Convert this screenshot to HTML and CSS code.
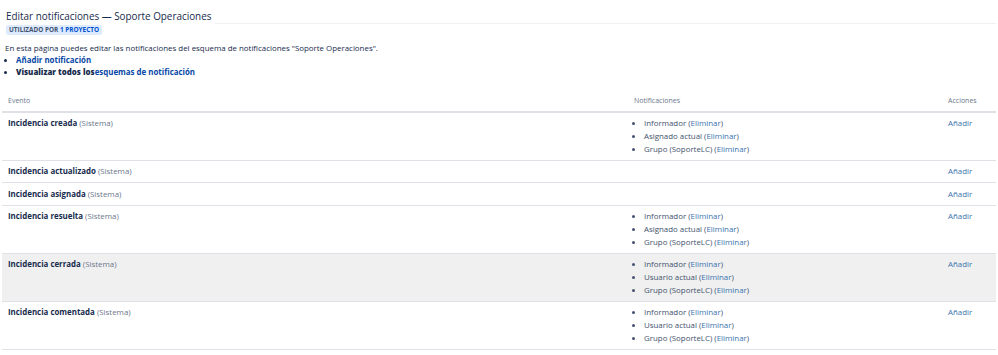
FILE: index.html
```html
<!DOCTYPE html>
<html lang="es">
<head>
<meta charset="utf-8">
<title>Editar notificaciones</title>
<link rel="stylesheet" href="styles.css">
</head>
<body>
<div class="page">
  <header class="page-header">
    <div class="title-row">
      <h1 class="title">Editar notificaciones — Soporte Operaciones</h1>
      <span class="title-rule"></span>
    </div>
    <span class="badge">Utilizado por <span class="badge-num">1 proyecto</span></span>
  </header>
  <p class="intro">En esta página puedes editar las notificaciones del esquema de notificaciones "Soporte Operaciones".</p>
  <ul class="ops">
    <li><a class="strong-link" href="#">Añadir notificación</a></li>
    <li><b>Visualizar todos los</b><a class="strong-link" href="#">esquemas de notificación</a></li>
  </ul>
  <table class="events">
    <thead>
      <tr><th class="c-ev">Evento</th><th class="c-no">Notificaciones</th><th class="c-ac">Acciones</th></tr>
    </thead>
    <tbody>
      <tr>
        <td class="c-ev"><b>Incidencia creada</b> <span class="sys">(Sistema)</span></td>
        <td class="c-no"><ul class="notifs">
          <li>Informador (<a href="#">Eliminar</a>)</li>
          <li>Asignado actual (<a href="#">Eliminar</a>)</li>
          <li>Grupo (SoporteLC) (<a href="#">Eliminar</a>)</li>
        </ul></td>
        <td class="c-ac"><a href="#">Añadir</a></td>
      </tr>
      <tr>
        <td class="c-ev"><b>Incidencia actualizado</b> <span class="sys">(Sistema)</span></td>
        <td class="c-no"></td>
        <td class="c-ac"><a href="#">Añadir</a></td>
      </tr>
      <tr>
        <td class="c-ev"><b>Incidencia asignada</b> <span class="sys">(Sistema)</span></td>
        <td class="c-no"></td>
        <td class="c-ac"><a href="#">Añadir</a></td>
      </tr>
      <tr>
        <td class="c-ev"><b>Incidencia resuelta</b> <span class="sys">(Sistema)</span></td>
        <td class="c-no"><ul class="notifs">
          <li>Informador (<a href="#">Eliminar</a>)</li>
          <li>Asignado actual (<a href="#">Eliminar</a>)</li>
          <li>Grupo (SoporteLC) (<a href="#">Eliminar</a>)</li>
        </ul></td>
        <td class="c-ac"><a href="#">Añadir</a></td>
      </tr>
      <tr class="hover">
        <td class="c-ev"><b>Incidencia cerrada</b> <span class="sys">(Sistema)</span></td>
        <td class="c-no"><ul class="notifs">
          <li>Informador (<a href="#">Eliminar</a>)</li>
          <li>Usuario actual (<a href="#">Eliminar</a>)</li>
          <li>Grupo (SoporteLC) (<a href="#">Eliminar</a>)</li>
        </ul></td>
        <td class="c-ac"><a href="#">Añadir</a></td>
      </tr>
      <tr>
        <td class="c-ev"><b>Incidencia comentada</b> <span class="sys">(Sistema)</span></td>
        <td class="c-no"><ul class="notifs">
          <li>Informador (<a href="#">Eliminar</a>)</li>
          <li>Usuario actual (<a href="#">Eliminar</a>)</li>
          <li>Grupo (SoporteLC) (<a href="#">Eliminar</a>)</li>
        </ul></td>
        <td class="c-ac"><a href="#">Añadir</a></td>
      </tr>
    </tbody>
  </table>
</div>
</body>
</html>
```
FILE: styles.css
```css
* { box-sizing: border-box; }
html, body { margin: 0; padding: 0; background: #fff; }
body {
  font-family: "Open Sans", "Noto Sans", sans-serif;
  font-size: 7.9px;
  line-height: 12.75px;
  color: #172b4d;
}
.page { padding: 10px 2px 0 2px; }
a { color: #3b73af; text-decoration: none; }
.page-header { padding-left: 4px; }
.title-row { display: flex; align-items: flex-end; }
.title {
  margin: 0;
  font-size: 9.9px;
  line-height: 13px;
  font-weight: 400;
  color: #172b4d;
  white-space: nowrap;
}
.title-rule {
  flex: 1;
  margin: 0 0 -1px 4px;
  border-bottom: 1px solid #f1f1f1;
}
.badge {
  display: inline-block;
  margin-top: 1px;
  padding: 0 3px;
  background: #deebff;
  color: #42526e;
  font-size: 6.4px;
  line-height: 10px;
  font-weight: 700;
  text-transform: uppercase;
  border-radius: 2px;
}
.badge-num { color: #0052cc; }
.intro { margin: 6px 0 0 3px; line-height: 12px; }
.ops { margin: 0; padding: 0 0 0 14px; font-weight: 700; }
.ops li { line-height: 12px; }
.strong-link { color: #0747a6; font-weight: 700; }
.events {
  width: 100%;
  margin-top: 13px;
  border-collapse: collapse;
}
.events th {
  text-align: left;
  font-weight: 400;
  font-size: 7px;
  color: #6b778c;
  padding: 4px 6px 3px 6px;
  border-bottom: 2px solid #dfe1e6;
}
.events td {
  vertical-align: top;
  padding: 4.5px 6px 4.25px;
  border-bottom: 1px solid #dfe1e6;
}
.events .c-no { width: 314px; }
.events .c-ac { width: 54px; padding-right: 4px; }
.events tr.hover td { background: #f0f0f0; }
.sys { color: #6b778c; }
.notifs { margin: 0; padding: 0 0 0 10px; color: #42526e; }
.notifs li { line-height: 12.75px; }
```
